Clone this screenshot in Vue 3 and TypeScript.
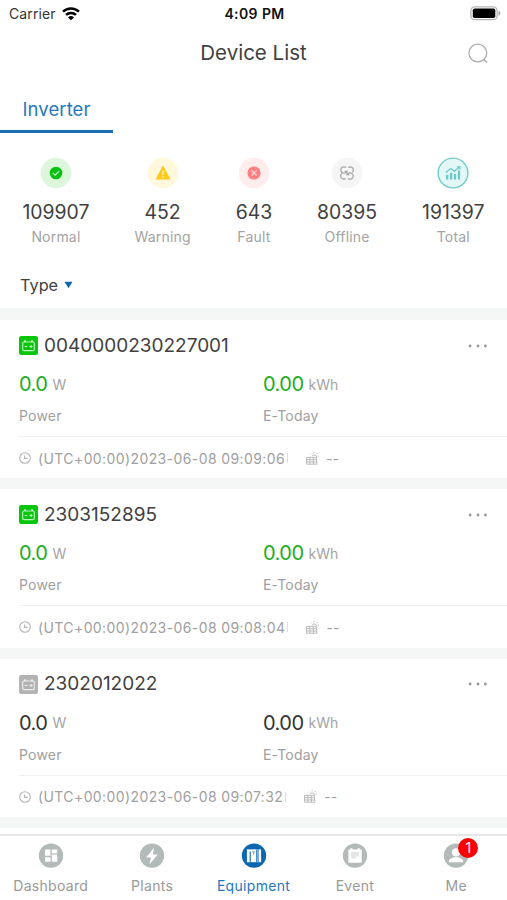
<script setup lang="ts">
interface Stat { kind: string; value: string; label: string }
interface Device { sn: string; online: boolean; power: string; today: string; time: string }
interface Tab { key: string; label: string; badge?: number }

const stats: Stat[] = [
  { kind: 'normal', value: '109907', label: 'Normal' },
  { kind: 'warning', value: '452', label: 'Warning' },
  { kind: 'fault', value: '643', label: 'Fault' },
  { kind: 'offline', value: '80395', label: 'Offline' },
  { kind: 'total', value: '191397', label: 'Total' },
]

const devices: Device[] = [
  { sn: '0040000230227001', online: true, power: '0.0', today: '0.00', time: '(UTC+00:00)2023-06-08 09:09:06' },
  { sn: '2303152895', online: true, power: '0.0', today: '0.00', time: '(UTC+00:00)2023-06-08 09:08:04' },
  { sn: '2302012022', online: false, power: '0.0', today: '0.00', time: '(UTC+00:00)2023-06-08 09:07:32' },
]

const tabs: Tab[] = [
  { key: 'dashboard', label: 'Dashboard' },
  { key: 'plants', label: 'Plants' },
  { key: 'equipment', label: 'Equipment' },
  { key: 'event', label: 'Event' },
  { key: 'me', label: 'Me', badge: 1 },
]
const active = 'equipment'
</script>

<template>
  <div class="screen">
    <div class="status">
      <div class="carrier">
        <span class="carrier-name">Carrier</span>
        <svg width="18" height="14" viewBox="0 0 18 14" fill="none" stroke="#000" stroke-width="2.5">
          <path d="M1 4.7a11.4 11.4 0 0 1 16 0" />
          <path d="M4 7.9a7.2 7.2 0 0 1 10 0" />
          <path d="M9 13.3 6 10.4a4.3 4.3 0 0 1 6 0z" fill="#000" stroke="none" />
        </svg>
      </div>
      <span class="clock">4:09 PM</span>
      <svg class="battery" width="31" height="15" viewBox="0 0 31 15">
        <rect x=".9" y=".9" width="26.2" height="12.8" rx="3.8" fill="#fff" stroke="#b5b5b5" stroke-width="1.3" />
        <rect x="2.8" y="2.5" width="22.5" height="9.600" rx="1.8" fill="#000" />
        <path d="M28.5 4.8v5c2.4-.8 2.4-4.2 0-5z" fill="#a6a6a6" />
      </svg>
    </div>

    <header class="title-bar">
      <h1>Device List</h1>
      <svg class="search" width="22" height="22" viewBox="0 0 22 22" fill="none" stroke="#adadad" stroke-width="1.3">
        <circle cx="10.8" cy="11" r="8.9" />
        <path d="m16.6 17.3 3.3 3" stroke-width="1.6" />
      </svg>
    </header>

    <nav class="kinds"><span class="kind">Inverter</span></nav>

    <section class="stats">
      <div v-for="s in stats" :key="s.kind" class="stat">
        <svg width="32" height="32" viewBox="0 0 32 32" fill="none">
          <template v-if="s.kind === 'normal'">
            <circle cx="16" cy="16" r="15.2" fill="#dcf7dc" />
            <circle cx="16" cy="16" r="6.3" fill="#08c10c" />
            <path d="m12.8 16 2.3 2.2 4.1-4.1" stroke="#c9f5ca" stroke-width="1.2" />
          </template>
          <template v-else-if="s.kind === 'warning'">
            <circle cx="16" cy="16" r="15.2" fill="#fff8dc" />
            <path d="M16 9.6 22.6 22H9.4z" fill="#ffc91c" stroke="#ffc91c" stroke-width="1.2" stroke-linejoin="round" />
            <path d="M16 13.2v4.7M16 19.3v1.4" stroke="#fff6d5" stroke-width="1.3" />
          </template>
          <template v-else-if="s.kind === 'fault'">
            <circle cx="16" cy="16" r="15.2" fill="#ffeced" />
            <circle cx="16" cy="16" r="6.6" fill="#ff7f82" />
            <path d="m13.5 13.5 5 5m0-5-5 5" stroke="#ffdcdd" stroke-width="1.2" />
          </template>
          <template v-else-if="s.kind === 'offline'">
            <circle cx="16" cy="16" r="15.2" fill="#f5f5f5" />
            <g stroke="#a8a8a8" stroke-width="1.3">
              <path d="M15.2 10.6c-1.6-1.2-4-.9-5 .8-.9 1.7-.2 3.8 1.6 4.5 1.3.5 2.6.1 3.5-.8l1.3-1.3" />
              <path d="M16.8 21.4c1.6 1.2 4 .9 5-.8.9-1.7.2-3.8-1.6-4.5-1.3-.5-2.6-.1-3.5.8l-1.3 1.3" />
              <path d="M17.2 10.4c2-.9 4.3-.2 5 1.6.5 1.3.1 2.5-.9 3.4" />
              <path d="M14.8 21.6c-2 .9-4.3.2-5-1.6-.5-1.3-.1-2.5.9-3.4" />
              <path d="m13.8 14 4.4 4.2" />
            </g>
          </template>
          <template v-else>
            <circle cx="16" cy="16" r="14.9" fill="#e4f7f7" stroke="#72cdca" stroke-width="1.4" />
            <path d="M10.2 18v4.6M14.1 15.8v6.8M18 17v5.6M22 13.5v9.1" stroke="#69c9c6" stroke-width="2.3" />
            <path d="m8.8 15.5 5-4 3.7 2.7 5-4.2m-2.6-.2h3v2.8" stroke="#69c9c6" stroke-width="1.2" />
          </template>
        </svg>
        <span class="stat-value">{{ s.value }}</span>
        <span class="stat-label">{{ s.label }}</span>
      </div>
    </section>

    <div class="filter">
      <span>Type</span>
      <svg width="9" height="8" viewBox="0 0 9 8"><path d="M.5.7h8L4.5 7.3z" fill="#0d68b2" /></svg>
    </div>

    <main class="list">
      <article v-for="d in devices" :key="d.sn" class="card" :class="{ online: d.online }">
        <div class="card-head">
          <svg class="chip" width="19" height="19" viewBox="0 0 19 19">
            <rect class="chip-bg" width="19" height="19" rx="2.2" />
            <g fill="none" stroke="#fff" stroke-opacity=".75" stroke-width="1.1">
              <rect x="3.7" y="6" width="11.6" height="8.6" rx="1.3" />
              <path d="M6 6V4.3M13 6V4.3" stroke-width="1.8" />
              <path d="M5.6 10.5h2.8M10.6 10.5h3M12.1 9v3" />
            </g>
          </svg>
          <span class="sn">{{ d.sn }}</span>
          <svg class="more" width="20" height="4" viewBox="0 0 20 4" fill="#969696">
            <circle cx="2.1" cy="2" r="1.4" /><circle cx="10" cy="2" r="1.4" /><circle cx="17.4" cy="2" r="1.4" />
          </svg>
        </div>
        <div class="metrics">
          <div class="metric">
            <div class="reading"><span class="num">{{ d.power }}</span><span class="unit">W</span></div>
            <div class="name">Power</div>
          </div>
          <div class="metric">
            <div class="reading"><span class="num">{{ d.today }}</span><span class="unit">kWh</span></div>
            <div class="name">E-Today</div>
          </div>
        </div>
        <div class="card-foot">
          <svg width="12" height="12" viewBox="0 0 12 12" fill="none" stroke="#b5b5b5" stroke-width="1.1">
            <circle cx="6" cy="6" r="5.3" /><path d="M5.6 3.4v3h3" />
          </svg>
          <span class="time">{{ d.time }}</span>
          <span class="sep"></span>
          <svg width="14" height="13" viewBox="0 0 14 13" fill="none" stroke="#b3b3b3" stroke-width=".9">
            <path d="M1.5 5.4h9.7l.8 6.8H1.6zM1.6 7.7h9.9M1.6 10h10.2M4.9 5.4v6.8M8.2 5.4l.3 6.8" />
            <path d="M7 4.2a2.6 2.6 0 0 1 4.8 1.6M9 .1v1.2M5.9 1.6l.8.8M12.5 1.1l-.8 1M13.9 4h-1.2" />
          </svg>
          <span class="plant">--</span>
        </div>
      </article>
      <div class="card"></div>
    </main>

    <footer class="tabs">
      <div v-for="t in tabs" :key="t.key" class="tab" :class="{ active: t.key === active }">
        <div class="tab-icon">
          <svg width="26" height="26" viewBox="0 0 26 26">
            <circle class="disc" cx="13" cy="12.6" r="12.2" />
            <g v-if="t.key === 'dashboard'" fill="#fff">
              <path d="M7 6.6h5.5v6.2H7zM13.8 6.6h5.5v3.6h-5.5zM7 14.2h5.5v4.6H7zM13.8 11.6h5.5v7.2h-5.5z" />
            </g>
            <path v-else-if="t.key === 'plants'" d="M15 4.8 7.2 14.5h4.7l-1.3 6.8 8.2-9.8h-4.9z" fill="#fff" />
            <g v-else-if="t.key === 'equipment'">
              <path d="M5.9 6.4h14.2v12.8H5.9z" fill="#fff" />
              <path d="M9.2 8.4v10.8M15.8 6.4v12.8" stroke="#0b67b2" stroke-width="1.1" />
              <path d="M17.2 6.4v12.8" stroke="#0b67b2" stroke-width=".8" />
              <path d="M11 8.8h3.2M12.6 8.8v3" stroke="#78a9d3" stroke-width="1" />
            </g>
            <g v-else-if="t.key === 'event'">
              <path d="M6.4 6.6h2V5.2h2v1.4h5.4V5.2h2v1.4h1.9v13.2H6.4z" fill="#fff" />
              <path d="M9.2 8.8h7.8v4.8h-3.2v2H9.2z" fill="#e3e7e6" />
            </g>
            <g v-else fill="#fff">
              <circle cx="13" cy="9.4" r="4.2" />
              <path d="M5.8 19.3c0-3.300 3-5 7.200-5s7.200 1.700 7.200 5z" />
            </g>
          </svg>
          <span v-if="t.badge" class="badge">{{ t.badge }}</span>
        </div>
        <span class="tab-label">{{ t.label }}</span>
      </div>
    </footer>
  </div>
</template>

<style>
body { background: #fff; }
</style>

<style scoped>
.screen {
  display: flex;
  flex-direction: column;
  width: 507px;
  height: 900px;
  overflow: hidden;
  background: #fff;
  color: #414141;
  font-family: Inter, "Liberation Sans", sans-serif;
}
svg { display: block; flex: none; }
.status {
  display: grid;
  grid-template-columns: 1fr auto 1fr;
  align-items: center;
  height: 27px;
  padding: 0 6px 0 9px;
  box-sizing: border-box;
  color: #111;
}
.carrier { display: flex; align-items: center; gap: 6px; }
.carrier-name { font-size: 14px; color: #333; letter-spacing: 0.1px; }
.clock { font-size: 14px; font-weight: 600; letter-spacing: 0.4px; margin-right: 1px; }
.battery { justify-self: end; }
.title-bar {
  display: grid;
  grid-template-columns: 1fr auto 1fr;
  align-items: center;
  height: 51px;
  padding: 0 18px;
}
h1 { grid-column: 2; margin: 0; font-size: 20.5px; font-weight: 400; }
.search { justify-self: end; }
.kinds { display: flex; height: 55px; }
.kind {
  width: 113px;
  box-sizing: border-box;
  border-bottom: 3px solid #1a6fb5;
  text-align: center;
  line-height: 62px;
  font-size: 18.5px;
  letter-spacing: 0.1px;
  color: #1f78bd;
}
.stats { display: flex; justify-content: space-around; height: 130px; padding-top: 23.5px; box-sizing: border-box; }
.stat { display: flex; flex-direction: column; align-items: center; }
.stat-value { margin-top: 11px; font-size: 19.4px; line-height: 24px; }
.stat-label { margin-top: 4px; font-size: 14px; line-height: 17px; letter-spacing: 0.2px; color: #a3a3a3; }
.filter { display: flex; align-items: center; gap: 6px; height: 45px; padding: 0 20px 2px; box-sizing: border-box; font-size: 16.3px; }
.list { flex: 1; min-height: 0; overflow: hidden; display: flex; flex-direction: column; gap: 11px; padding-top: 12px; background: #f5f6f6; }
.card { flex: none; height: 158.3px; padding-left: 19px; box-sizing: border-box; background: #fff; }
.card-head { display: flex; align-items: center; height: 51px; padding-right: 19px; }
.sn { margin-left: 6px; font-size: 19px; line-height: 24px; }
.more { margin-left: auto; }
.chip-bg { fill: #b3b3b3; }
.online .chip-bg { fill: #08c60c; }
.metrics { display: grid; grid-template-columns: 244px 1fr; height: 65px; }
.reading { display: flex; align-items: center; gap: 5px; height: 26px; }
.num { font-size: 20px; line-height: 24px; letter-spacing: -0.5px; color: #333; }
.online .num { color: #20ad20; }
.unit { font-size: 14px; color: #a3a3a3; }
.name { height: 38px; line-height: 38px; font-size: 14px; letter-spacing: 0.2px; color: #a0a0a0; }
.card-foot { display: flex; align-items: center; height: 42px; border-top: 1px solid #f0f1f1; font-size: 14px; color: #a0a0a0; }
.time { margin-left: 7px; letter-spacing: 0.4px; }
.sep { width: 1px; height: 10px; margin: 0 17px 0 2px; background: #dedede; }
.plant { margin-left: 7px; }
.tabs { display: flex; height: 66px; box-sizing: border-box; border-top: 2px solid #e6e7e7; background: #fff; }
.tab { flex: 1; display: flex; flex-direction: column; align-items: center; padding-top: 7px; }
.tab-icon { position: relative; }
.disc { fill: #b2bbb9; }
.active .disc { fill: #0b67b2; }
.tab-label { margin-top: 7px; font-size: 14px; line-height: 20px; letter-spacing: 0.3px; color: #999; }
.active .tab-label { color: #1f78bd; }
.badge {
  position: absolute;
  top: -5px;
  left: 15px;
  width: 20px;
  height: 20px;
  border-radius: 50%;
  background: #fb0007;
  color: #fff;
  font-size: 14px;
  line-height: 20px;
  text-align: center;
}
</style>
